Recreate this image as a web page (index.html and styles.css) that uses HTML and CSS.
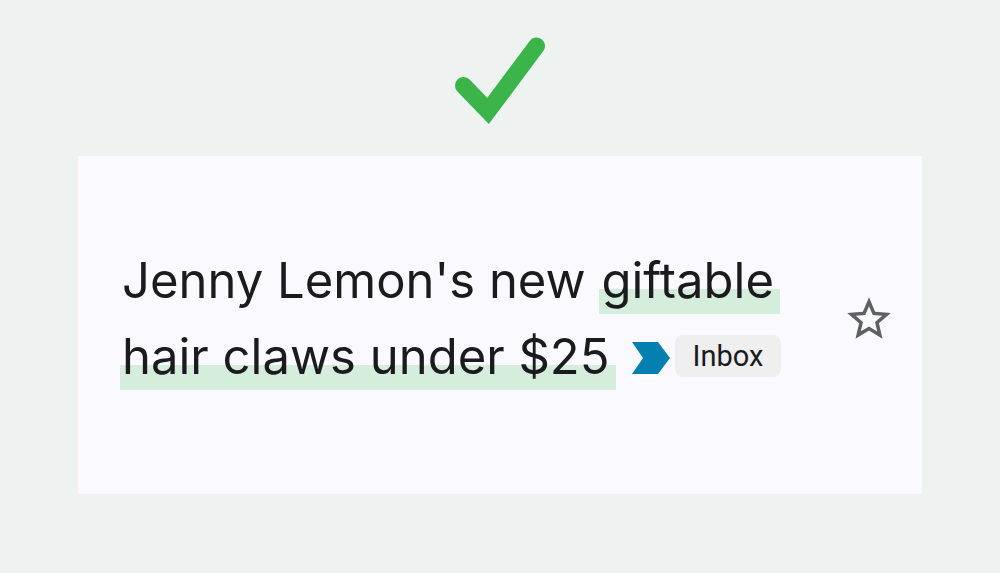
FILE: index.html
```html
<!DOCTYPE html>
<html lang="en">
<head>
<meta charset="utf-8">
<title>Subject line</title>
<link rel="stylesheet" href="styles.css">
</head>
<body>
<main class="page">
  <svg class="check" viewBox="0 0 92 88" role="img" aria-label="Good example"><path d="M9.500 48.500 L34 74 L82.500 9" fill="none" stroke="#3bb54a" stroke-width="17" stroke-linecap="round"/></svg>
  <section class="card">
    <h1 class="subject">
      <span class="line"><span class="plain">Jenny Lemon's new </span><mark class="mark">giftable</mark></span>
      <span class="line"><mark class="mark">hair claws under $25</mark><svg class="important" viewBox="0 0 38 32" aria-hidden="true"><path d="M0 0H26L38 16L26 32H0L11 16Z" fill="#0480b0"/></svg><span class="label">Inbox</span></span>
    </h1>
    <button class="star" type="button" aria-label="Star"><svg viewBox="1 1 22 22" aria-hidden="true"><path fill="#5f6064" d="M22 9.240l-7.190-.620L12 2 9.190 8.630 2 9.240l5.460 4.730L5.820 21 12 17.270 18.180 21l-1.630-7.030L22 9.240zM12 15.400l-3.760 2.270 1-4.280-3.320-2.880 4.380-.380L12 6.100l1.710 4.040 4.380.380-3.320 2.880 1 4.280L12 15.400z"/></svg></button>
  </section>
</main>
</body>
</html>
```
FILE: styles.css
```css
* { box-sizing: border-box; }
body { margin: 0; background: #eef3f2; color: #1b1b1f; font-family: Inter, sans-serif; }
.page { padding: 37px 78px 78px; display: flex; flex-direction: column; align-items: center; gap: 31px; }
.check { width: 92px; height: 88px; }
.card { width: 100%; min-height: 338px; background: #faf9ff; display: flex; align-items: center; justify-content: space-between; padding: 0 29px 12px 42px; }
.subject { margin: 0; font-size: 49px; line-height: 76px; font-weight: 400; }
.line { display: flex; align-items: center; white-space: pre; }
.plain { padding-left: 2px; }
.mark { color: inherit; padding: 0 6px 0 2px; background: linear-gradient(#d5eddb, #d5eddb) 0 46px / 100% 25px no-repeat; }
.important { width: 38px; height: 32px; margin: 2px 5px 0 16px; }
.label { font: 29px/42px Roboto, sans-serif; background: #efefef; border-radius: 8px; padding: 0 18px; margin-bottom: 2px; }
.star { border: 0; padding: 0; background: none; width: 48px; height: 48px; }
.star svg { display: block; width: 100%; }
```
